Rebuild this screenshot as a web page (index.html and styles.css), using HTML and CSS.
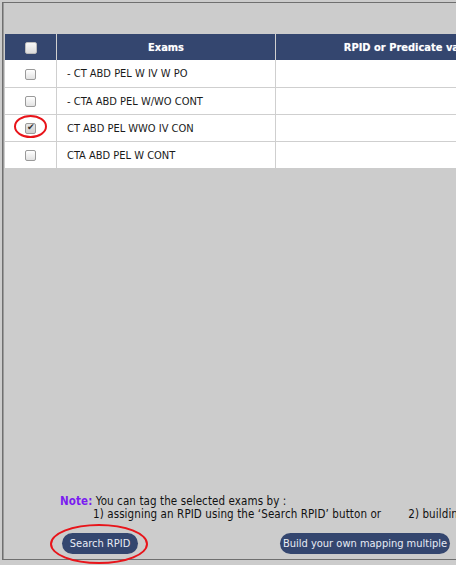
FILE: index.html
```html
<!DOCTYPE html>
<html>
<head>
<meta charset="utf-8">
<link rel="stylesheet" href="styles.css">
</head>
<body>
<div class="panel">
  <table class="grid">
    <colgroup>
      <col class="col-check">
      <col class="col-exam">
      <col class="col-rpid">
    </colgroup>
    <thead>
      <tr>
        <th class="c-check"><input type="checkbox" class="cb"></th>
        <th class="c-head">Exams</th>
        <th class="c-head">RPID or Predicate value</th>
      </tr>
    </thead>
    <tbody>
      <tr><td class="c-check"><input type="checkbox" class="cb"></td><td class="c-exam">- CT ABD PEL W IV W PO</td><td class="c-val"></td></tr>
      <tr><td class="c-check"><input type="checkbox" class="cb"></td><td class="c-exam">- CTA ABD PEL W/WO CONT</td><td class="c-val"></td></tr>
      <tr><td class="c-check"><input type="checkbox" class="cb" checked><span class="ring ring-row"></span></td><td class="c-exam">CT ABD PEL WWO IV CON</td><td class="c-val"></td></tr>
      <tr><td class="c-check"><input type="checkbox" class="cb"></td><td class="c-exam">CTA ABD PEL W CONT</td><td class="c-val"></td></tr>
    </tbody>
  </table>

  <div class="footer">
    <div class="note">
      <div><span class="note-label">Note:</span> You can tag the selected exams by :</div>
      <div class="note-items"><span>1) assigning an RPID using the ‘Search RPID’ button or</span><span class="item2">2) building your own mapping</span></div>
    </div>
    <div class="actions">
      <div class="btn-wrap"><button class="btn btn-search">Search RPID</button><span class="ring ring-btn"></span></div>
      <button class="btn btn-build">Build your own mapping multiple</button>
    </div>
  </div>
</div>
</body>
</html>
```

FILE: styles.css
```css
html, body {
  margin: 0;
  padding: 0;
  background: #cccccc;
  overflow: hidden;
  width: 456px;
  height: 565px;
}

body {
  font-family: "DejaVu Sans Condensed", "DejaVu Sans", sans-serif;
  font-size: 11px;
  color: #1a1a1a;
}

.panel {
  margin: 2px 0 0 2px;
  width: 640px;
  height: 558px;
  border-top: 1px solid #6f6f6f;
  border-left: 1px solid #6f6f6f;
  border-bottom: 1px solid #6f6f6f;
  box-shadow: inset 1px 0 0 #9a9a9a;
  padding: 31px 0 0 2px;
  box-sizing: border-box;
  display: flex;
  flex-direction: column;
}

.grid {
  border-collapse: separate;
  border-spacing: 0;
  table-layout: fixed;
  width: 539px;
  background: #ffffff;
}

.col-check { width: 51px; }
.col-exam { width: 219px; }
.col-rpid { width: 269px; }

.grid thead tr { height: 26px; }
.grid tbody tr { height: 27px; }

.grid th {
  background: #34466f;
  color: #ffffff;
  font-weight: bold;
  padding: 0;
  text-align: center;
  text-shadow: 0 0 1px rgba(255,255,255,0.4);
}

.grid th.c-head {
  border-left: 1px solid #d0d0d0;
}

.grid td {
  padding: 0;
}

.grid tbody tr + tr td {
  border-top: 1px solid #cfcfcf;
}

.grid td.c-exam, .grid td.c-val {
  border-left: 1px solid #cfcfcf;
}

.c-check {
  text-align: center;
  position: relative;
}

td.c-exam {
  padding-left: 10px;
  color: #1a1a1a;
  white-space: nowrap;
}

.cb {
  -webkit-appearance: none;
  appearance: none;
  width: 11px;
  height: 11px;
  margin: 0;
  border: 1px solid #9a9a9a;
  border-radius: 2px;
  background: linear-gradient(#ffffff, #e2e2e2);
  vertical-align: middle;
  position: relative;
}

th .cb {
  width: 12px;
  height: 12px;
  border-color: #bbbbbb;
  background: linear-gradient(#f8f8f8, #dcdcdc);
}

.cb:checked {
  background: linear-gradient(#e8e8e8, #cfcfcf);
}

.cb:checked::after {
  content: "✔";
  position: absolute;
  left: 1px;
  top: -2px;
  font-size: 9px;
  color: #333;
}

.ring {
  position: absolute;
  border: 2px solid #e8141a;
  border-radius: 50%;
  pointer-events: none;
}

.ring-row {
  left: 9px;
  top: 0;
  width: 29px;
  height: 19px;
}

.footer {
  margin-top: auto;
  padding-bottom: 5px;
}

.note {
  padding-left: 55px;
  line-height: 13px;
  font-size: 11.5px;
  letter-spacing: 0.1px;
  color: #111;
}

.note-label {
  color: #7a1cf0;
  font-weight: bold;
}

.note-items {
  padding-left: 33px;
  white-space: nowrap;
  display: flex;
}

.item2 {
  margin-left: 27px;
}

.actions {
  margin-top: 12px;
  display: flex;
  align-items: center;
  padding-left: 57px;
}

.btn-wrap {
  position: relative;
}

.btn {
  background: #34466f;
  color: #e8ecf5;
  border: none;
  border-radius: 11px;
  height: 21px;
  padding: 0;
  font-family: "DejaVu Sans Condensed", "DejaVu Sans", sans-serif;
  font-size: 11px;
  display: block;
}

.btn-search {
  width: 76px;
}

.btn-build {
  width: 170px;
  margin-left: 142px;
}

.ring-btn {
  left: -12px;
  top: -9px;
  width: 94px;
  height: 36px;
}
```
